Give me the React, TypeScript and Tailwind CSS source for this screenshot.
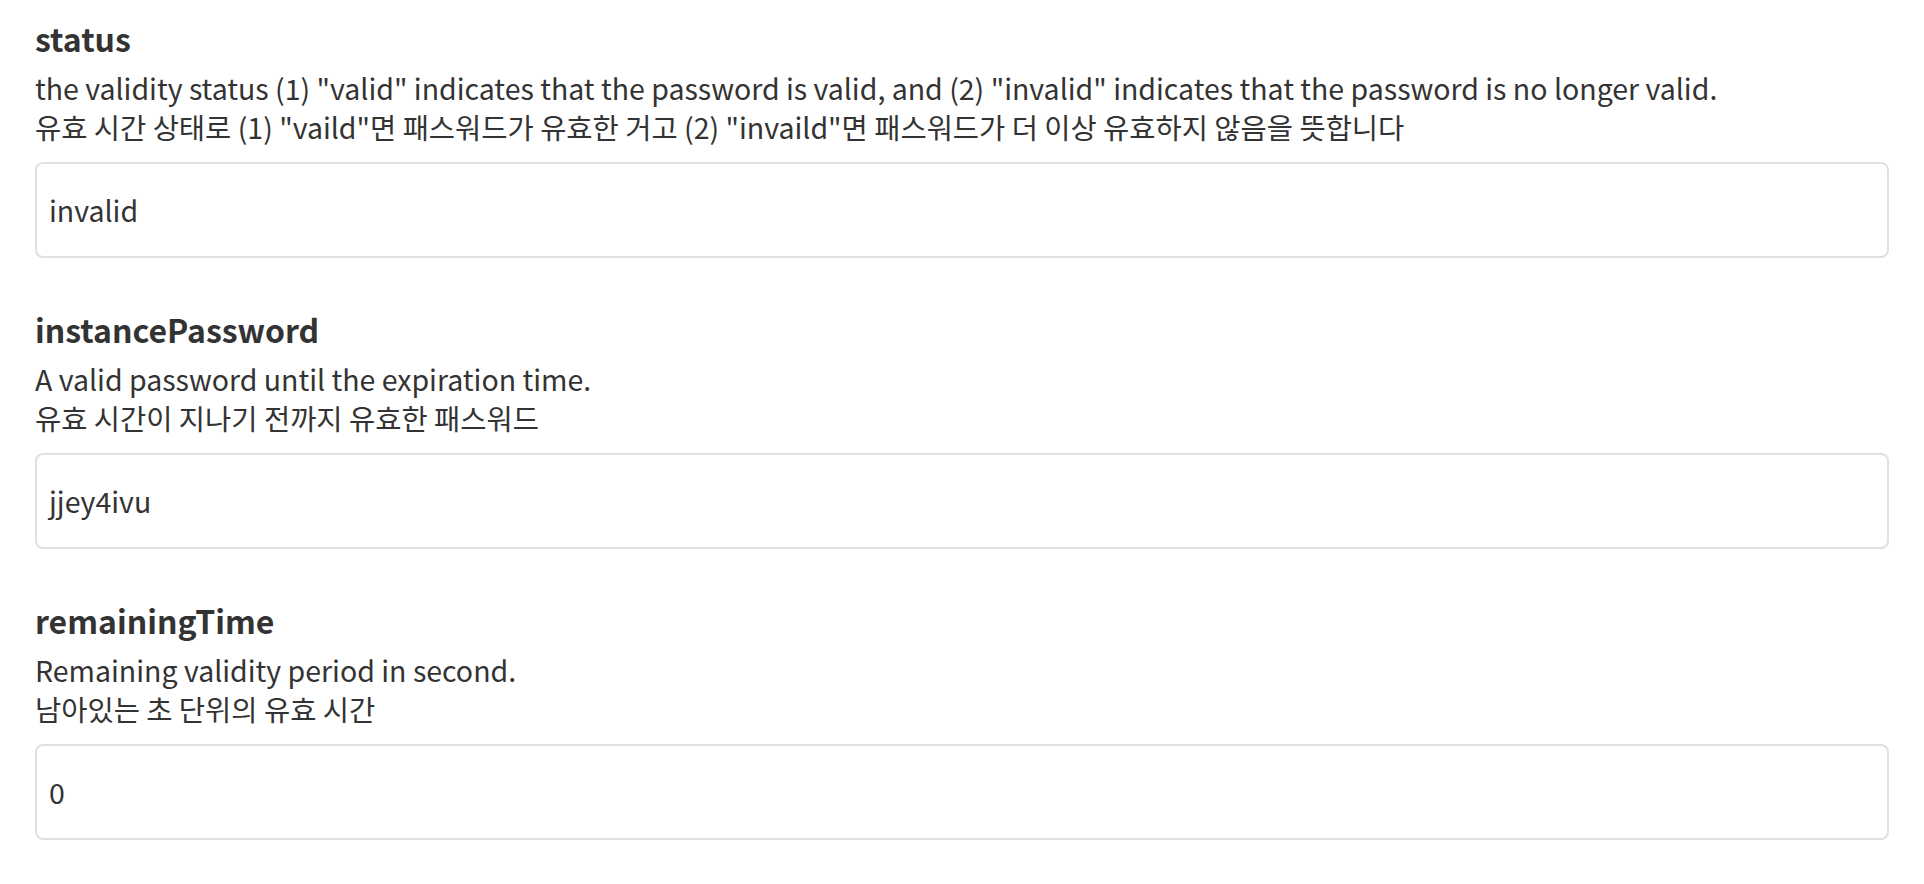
import React from "react";

interface Field {
  name: string;
  en: string;
  ko: string;
  value: string;
}

const fields: Field[] = [
  {
    name: "status",
    en: 'the validity status (1) "valid" indicates that the password is valid, and (2) "invalid" indicates that the password is no longer valid.',
    ko: '유효 시간 상태로 (1) "vaild"면 패스워드가 유효한 거고 (2) "invaild"면 패스워드가 더 이상 유효하지 않음을 뜻합니다',
    value: "invalid",
  },
  {
    name: "instancePassword",
    en: "A valid password until the expiration time.",
    ko: "유효 시간이 지나기 전까지 유효한 패스워드",
    value: "jjey4ivu",
  },
  {
    name: "remainingTime",
    en: "Remaining validity period in second.",
    ko: "남아있는 초 단위의 유효 시간",
    value: "0",
  },
];

function FieldBlock({ field }: { field: Field }) {
  return (
    <section className="mb-[49px]">
      <h3 className="text-[32px] leading-[44px] font-bold text-[#333]">{field.name}</h3>
      <p className="mt-[8px] text-[28.5px] leading-[39px] text-[#333]">
        {field.en}
        <br />
        {field.ko}
      </p>
      <div className="mt-[16px] h-[96px] flex items-center px-[12px] border-2 border-[#e0e0e0] rounded-[8px] bg-white text-[28.5px] text-[#333]">
        {field.value}
      </div>
    </section>
  );
}

export default function App() {
  return (
    <div
      className="min-h-screen bg-white px-[35px] pt-[16px]"
      style={{ fontFamily: '"Noto Sans CJK KR", "Noto Sans", sans-serif' }}
    >
      {fields.map((f) => (
        <FieldBlock key={f.name} field={f} />
      ))}
    </div>
  );
}
